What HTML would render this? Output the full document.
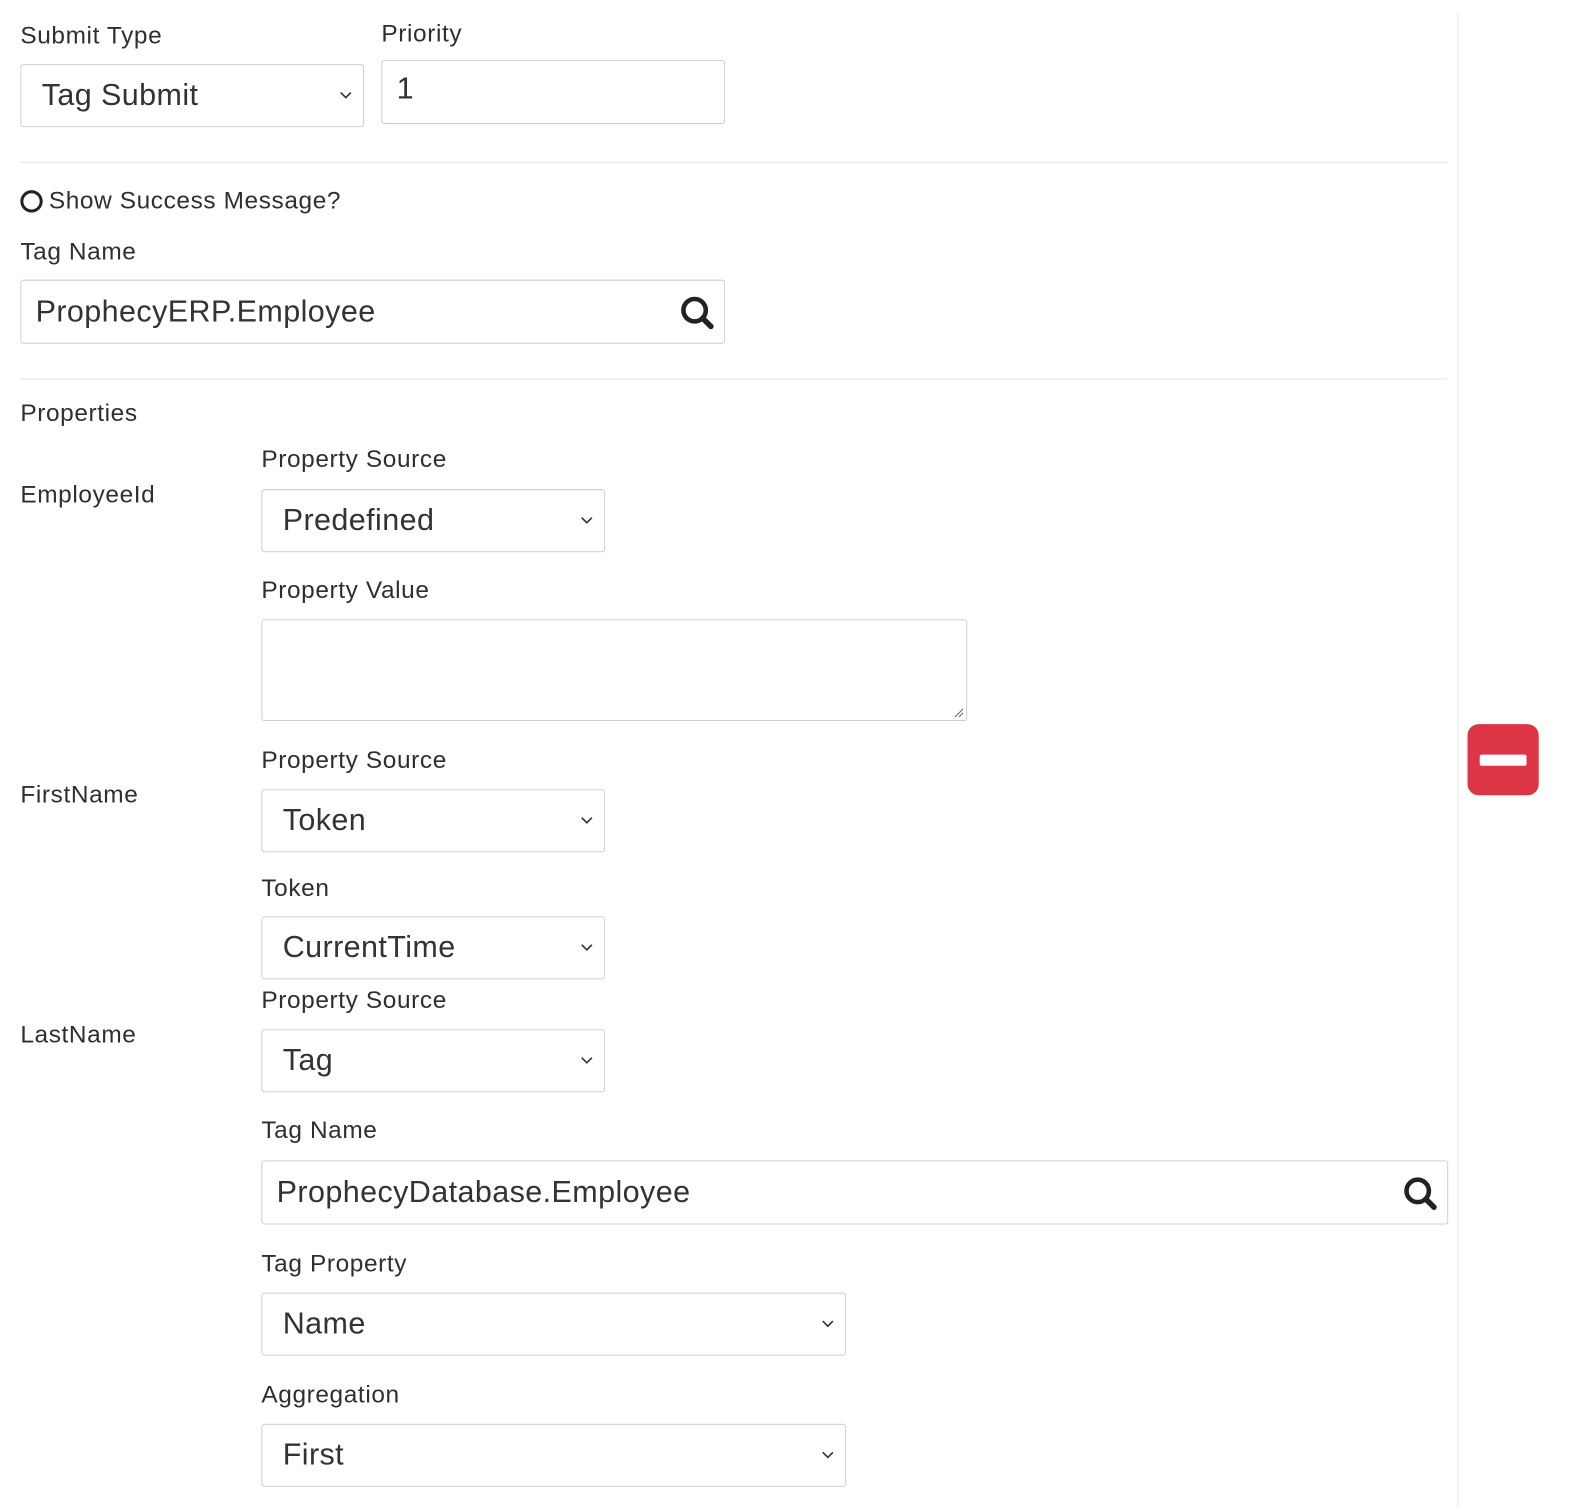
<!DOCTYPE html>
<html><head><meta charset="utf-8"><style>
html,body{margin:0;padding:0;background:#fff;width:1594px;height:1496px;overflow:hidden}
#w{position:absolute;left:0;top:0;width:1570px;height:1472px;transform:scale(1.017);transform-origin:0 0;font-family:"Liberation Sans",sans-serif;color:#333}
.l{position:absolute;font-size:24px;line-height:28px;white-space:nowrap;letter-spacing:0.6px;color:#2f2f2f}
.b{position:absolute;border:1px solid #cfcfcf;border-radius:3px;box-sizing:border-box;background:#fff}
.t{position:absolute;left:20px;font-size:30px;line-height:30px;top:50%;margin-top:-15px;letter-spacing:0.4px;color:#333;white-space:nowrap}
.c{position:absolute;right:10px;top:50%;margin-top:-5px}
.hr{position:absolute;left:20px;width:1403px;height:1px;background:#e3e3e3}
</style></head><body><div id="w">
<div style="position:absolute;left:1433px;top:12px;width:1px;height:1470px;background:#e6e6e6"></div>

<div class="l" style="left:20px;top:22px">Submit Type</div>
<div class="b" style="left:20px;top:63px;width:338px;height:62px"><span class="t">Tag Submit</span><svg class="c" width="14" height="10"><path d="M2 2l5 5 5-5" fill="none" stroke="#333" stroke-width="1.6"/></svg></div>
<div class="l" style="left:375px;top:20px">Priority</div>
<div class="b" style="left:375px;top:59px;width:338px;height:63px"><span class="t" style="left:14px;margin-top:-18px">1</span></div>

<div class="hr" style="top:159px"></div>
<div style="position:absolute;left:20px;top:187px;width:22px;height:22px;border:3px solid #222;border-radius:50%;box-sizing:border-box"></div>
<div class="l" style="left:48px;top:184px">Show Success Message?</div>
<div class="l" style="left:20px;top:234px">Tag Name</div>
<div class="b" style="left:20px;top:275px;width:693px;height:63px"><span class="t" style="left:14px">ProphecyERP.Employee</span>
<svg style="position:absolute;right:8px;top:14px" width="36" height="36" viewBox="0 0 36 36"><circle cx="15" cy="15" r="11" fill="none" stroke="#222" stroke-width="4.5"/><path d="M23 23l8 8" stroke="#222" stroke-width="5.5" stroke-linecap="round"/></svg></div>
<div class="hr" style="top:372px"></div>

<div class="l" style="left:20px;top:393px">Properties</div>

<div class="l" style="left:20px;top:473px">EmployeeId</div>
<div class="l" style="left:257px;top:438px">Property Source</div>
<div class="b" style="left:257px;top:481px;width:338px;height:62px"><span class="t">Predefined</span><svg class="c" width="14" height="10"><path d="M2 2l5 5 5-5" fill="none" stroke="#333" stroke-width="1.6"/></svg></div>
<div class="l" style="left:257px;top:567px">Property Value</div>
<div class="b" style="left:257px;top:609px;width:694px;height:100px"><svg style="position:absolute;right:2px;bottom:2px" width="12" height="12"><path d="M11 3L3 11M11 7L7 11" stroke="#666" stroke-width="1"/></svg></div>

<div class="l" style="left:20px;top:768px">FirstName</div>
<div class="l" style="left:257px;top:734px">Property Source</div>
<div class="b" style="left:257px;top:776px;width:338px;height:62px"><span class="t">Token</span><svg class="c" width="14" height="10"><path d="M2 2l5 5 5-5" fill="none" stroke="#333" stroke-width="1.6"/></svg></div>
<div class="l" style="left:257px;top:860px">Token</div>
<div class="b" style="left:257px;top:901px;width:338px;height:62px"><span class="t">CurrentTime</span><svg class="c" width="14" height="10"><path d="M2 2l5 5 5-5" fill="none" stroke="#333" stroke-width="1.6"/></svg></div>

<div class="l" style="left:20px;top:1004px">LastName</div>
<div class="l" style="left:257px;top:970px">Property Source</div>
<div class="b" style="left:257px;top:1012px;width:338px;height:62px"><span class="t">Tag</span><svg class="c" width="14" height="10"><path d="M2 2l5 5 5-5" fill="none" stroke="#333" stroke-width="1.6"/></svg></div>
<div class="l" style="left:257px;top:1098px">Tag Name</div>
<div class="b" style="left:257px;top:1141px;width:1167px;height:63px"><span class="t" style="left:14px">ProphecyDatabase.Employee</span>
<svg style="position:absolute;right:8px;top:14px" width="36" height="36" viewBox="0 0 36 36"><circle cx="15" cy="15" r="11" fill="none" stroke="#222" stroke-width="4.5"/><path d="M23 23l8 8" stroke="#222" stroke-width="5.5" stroke-linecap="round"/></svg></div>
<div class="l" style="left:257px;top:1229px">Tag Property</div>
<div class="b" style="left:257px;top:1271px;width:575px;height:62px"><span class="t">Name</span><svg class="c" width="14" height="10"><path d="M2 2l5 5 5-5" fill="none" stroke="#333" stroke-width="1.6"/></svg></div>
<div class="l" style="left:257px;top:1358px">Aggregation</div>
<div class="b" style="left:257px;top:1400px;width:575px;height:62px"><span class="t">First</span><svg class="c" width="14" height="10"><path d="M2 2l5 5 5-5" fill="none" stroke="#333" stroke-width="1.6"/></svg></div>

<div style="position:absolute;left:1443px;top:712px;width:70px;height:70px;background:#dc3545;border-radius:11px"><div style="position:absolute;left:12px;top:30px;width:46px;height:11px;background:#fff;border-radius:2px"></div></div>
</div></body></html>
